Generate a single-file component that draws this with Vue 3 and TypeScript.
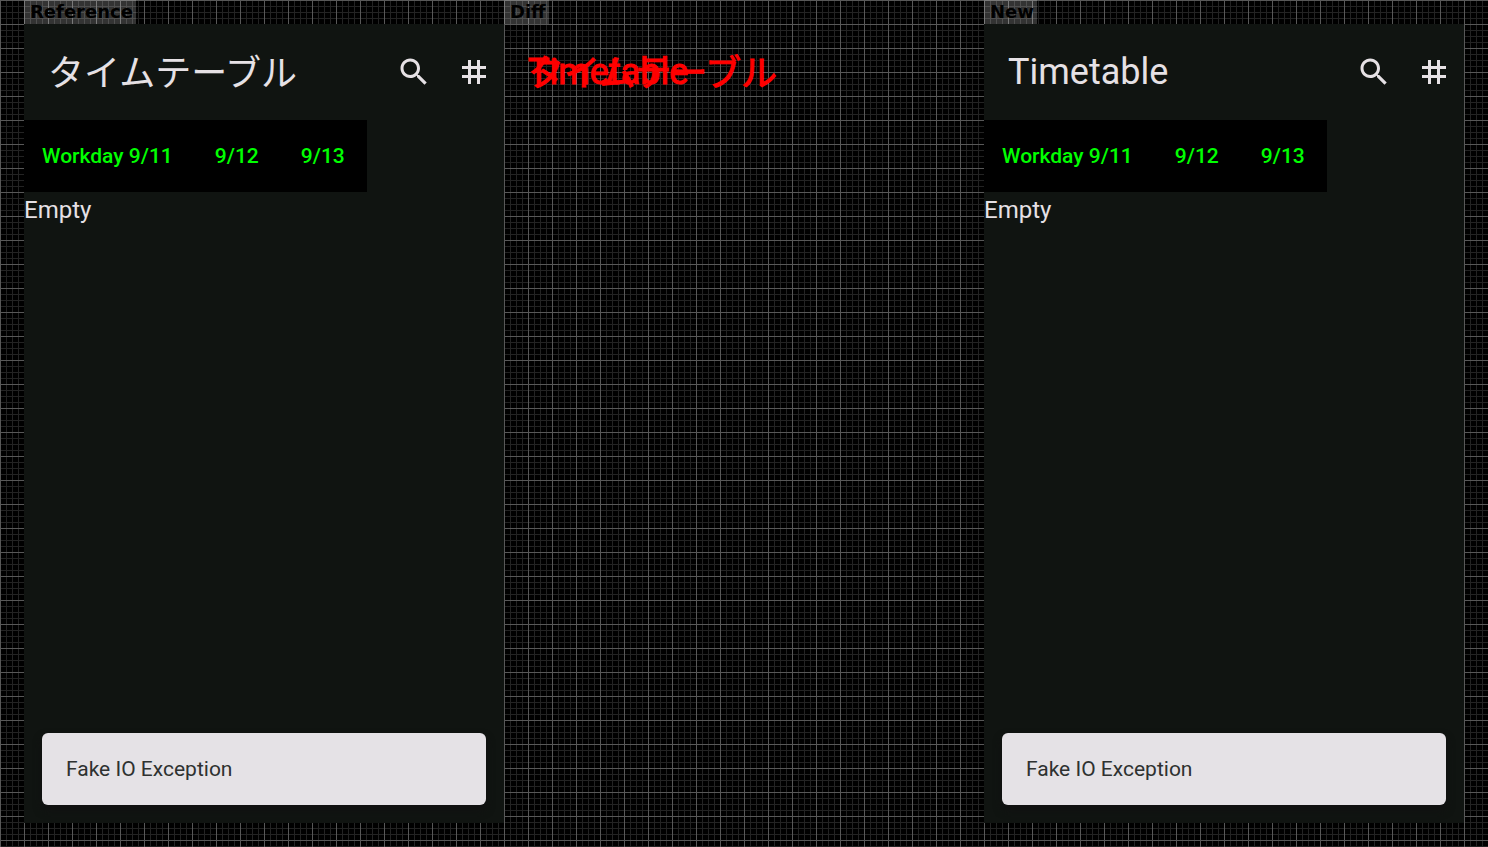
<script setup lang="ts">
interface Screen {
  label: string
  title: string
  lang: string
}

const reference: Screen = { label: 'Reference', title: 'タイムテーブル', lang: 'ja' }
const updated: Screen = { label: 'New', title: 'Timetable', lang: 'en' }
const columns: (Screen | null)[] = [reference, null, updated]
const days: string[] = ['Workday 9/11', '9/12', '9/13']
</script>

<template>
  <main class="board">
    <section v-for="(screen, i) in columns" :key="i" class="column">
      <h2 class="label">{{ screen ? screen.label : 'Diff' }}</h2>

      <div v-if="screen" class="screen">
        <header class="bar">
          <h1 class="title" :lang="screen.lang">{{ screen.title }}</h1>
          <button class="icon-button" type="button" aria-label="Search">
            <svg viewBox="0 0 24 24" aria-hidden="true">
              <path d="M15.5 14h-.79l-.28-.27C15.41 12.59 16 11.11 16 9.5 16 5.91 13.09 3 9.5 3S3 5.91 3 9.5 5.91 16 9.5 16c1.61 0 3.09-.59 4.23-1.57l.27.28v.79l5 4.99L20.49 19l-4.99-5zm-6 0C7.01 14 5 11.99 5 9.5S7.01 5 9.5 5 14 7.01 14 9.5 11.99 14 9.5 14z" />
            </svg>
          </button>
          <button class="icon-button" type="button" aria-label="Grid">
            <svg viewBox="0 0 24 24" aria-hidden="true">
              <path d="M20 10V8h-4V4h-2v4h-4V4H8v4H4v2h4v4H4v2h4v4h2v-4h4v4h2v-4h4v-2h-4v-4h4zm-6 4h-4v-4h4v4z" />
            </svg>
          </button>
        </header>
        <nav class="tabs">
          <button v-for="day in days" :key="day" class="tab" type="button">{{ day }}</button>
        </nav>
        <p class="empty">Empty</p>
        <div class="snackbar" role="status">Fake IO Exception</div>
      </div>

      <div v-else class="diff">
        <p class="overlay">
          <span class="title changed" :lang="reference.lang">{{ reference.title }}</span>
          <span class="title changed" :lang="updated.lang">{{ updated.title }}</span>
        </p>
      </div>
    </section>
  </main>
</template>

<style>
body {
  margin: 0;
  background: #000;
}
</style>

<style scoped>
.board {
  box-sizing: border-box;
  display: grid;
  grid-template-columns: repeat(3, 1fr);
  min-height: 100vh;
  padding: 0 24px 24px;
  font-family: Roboto, "Noto Sans CJK JP", sans-serif;
  background:
    linear-gradient(to right, #585858 1px, transparent 1px) 0 0 / 24px 24px,
    linear-gradient(to bottom, #585858 1px, transparent 1px) 0 0 / 24px 24px,
    linear-gradient(to right, #232323 1px, transparent 1px) 0 0 / 6px 6px,
    linear-gradient(to bottom, #232323 1px, transparent 1px) 0 0 / 6px 6px,
    #000;
}

.column {
  display: flex;
  flex-direction: column;
  align-items: flex-start;
  min-width: 0;
}

.label {
  height: 24px;
  margin: 0;
  padding: 0 3px 0 6px;
  background: rgba(255, 255, 255, 0.2);
  color: #000;
  font: bold 18px/24px "DejaVu Sans", sans-serif;
}

.screen,
.diff {
  display: flex;
  flex: 1;
  flex-direction: column;
  align-self: stretch;
}

.screen {
  overflow: hidden;
  background: #101411;
  color: #e6e1e5;
}

.bar {
  display: flex;
  align-items: center;
  height: 96px;
  padding-left: 24px;
}

.title {
  flex: 1;
  margin: 0;
  font-size: 36px;
  font-weight: 400;
  line-height: 48px;
  white-space: nowrap;
}

.title:lang(ja) {
  padding-top: 4px;
}

.icon-button {
  display: grid;
  place-items: center;
  width: 60px;
  height: 60px;
  padding: 0;
  border: 0;
  background: none;
  color: inherit;
}

.icon-button svg {
  width: 36px;
  height: 36px;
  fill: currentColor;
}

.tabs {
  display: flex;
  align-self: flex-start;
  gap: 42px;
  height: 72px;
  padding: 0 22px 0 18px;
  background: #000;
}

.tab {
  padding: 0;
  border: 0;
  background: none;
  color: #0f0;
  font: 500 21px/30px Roboto, sans-serif;
}

.empty {
  margin: 0;
  font-size: 24px;
  line-height: 36px;
}

.snackbar {
  margin: auto 18px 18px;
  padding: 21px 24px;
  border-radius: 6px;
  background: #e5e2e6;
  box-shadow: 0 5px 9px #111;
  color: #2e3130;
  font-size: 21px;
  line-height: 30px;
}

.overlay {
  display: grid;
  align-items: center;
  height: 96px;
  margin: 0;
  padding-left: 24px;
}

.changed {
  grid-area: 1 / 1;
  color: #f00;
  -webkit-text-stroke: 1px #f00;
}
</style>
